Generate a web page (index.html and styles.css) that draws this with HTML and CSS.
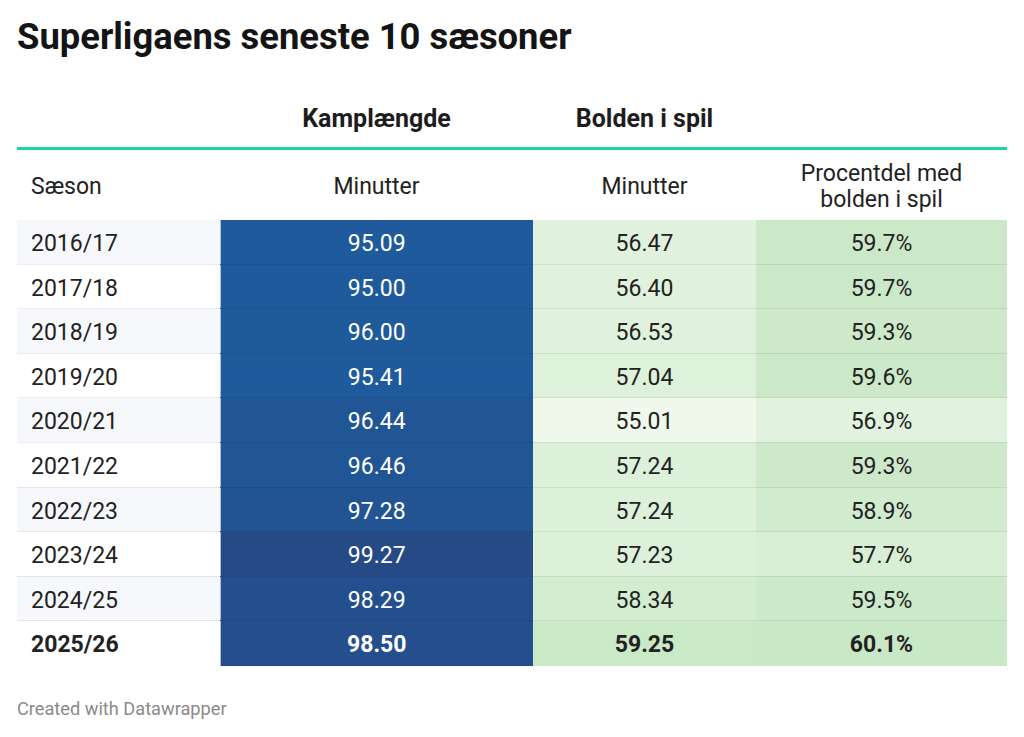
FILE: index.html
```html
<!DOCTYPE html>
<html lang="da">
<head>
<meta charset="utf-8">
<title>Superligaens seneste 10 sæsoner</title>
<link rel="stylesheet" href="styles.css">
</head>
<body>
<div class="chart">
  <h1 class="title">Superligaens seneste 10 sæsoner</h1>
  <table class="dw-table">
    <colgroup>
      <col class="c1"><col class="c2"><col class="c3"><col class="c4">
    </colgroup>
    <thead>
      <tr class="group-row">
        <th></th>
        <th class="center">Kamplængde</th>
        <th class="center">Bolden i spil</th>
        <th></th>
      </tr>
      <tr class="head-row">
        <th class="left">Sæson</th>
        <th class="center">Minutter</th>
        <th class="center">Minutter</th>
        <th class="center">Procentdel med<br>bolden i spil</th>
      </tr>
    </thead>
    <tbody>
      <tr class="odd"><td class="season">2016/17</td><td class="blue" style="background:#1f5b9c">95.09</td><td class="green" style="background:#e0f2dd">56.47</td><td class="green" style="background:#cbe9c8">59.7%</td></tr>
      <tr><td class="season">2017/18</td><td class="blue" style="background:#1f5b9c">95.00</td><td class="green" style="background:#e0f2dd">56.40</td><td class="green" style="background:#cbe9c8">59.7%</td></tr>
      <tr class="odd"><td class="season">2018/19</td><td class="blue" style="background:#1f5a9a">96.00</td><td class="green" style="background:#e0f2dd">56.53</td><td class="green" style="background:#cde9ca">59.3%</td></tr>
      <tr><td class="season">2019/20</td><td class="blue" style="background:#1f5b9c">95.41</td><td class="green" style="background:#def1db">57.04</td><td class="green" style="background:#cbe9c8">59.6%</td></tr>
      <tr class="odd"><td class="season">2020/21</td><td class="blue" style="background:#215696">96.44</td><td class="green" style="background:#eff8ea">55.01</td><td class="green" style="background:#e1f2de">56.9%</td></tr>
      <tr><td class="season">2021/22</td><td class="blue" style="background:#215696">96.46</td><td class="green" style="background:#ddf0da">57.24</td><td class="green" style="background:#cde9ca">59.3%</td></tr>
      <tr class="odd"><td class="season">2022/23</td><td class="blue" style="background:#225393">97.28</td><td class="green" style="background:#ddf0da">57.24</td><td class="green" style="background:#d0ebcd">58.9%</td></tr>
      <tr><td class="season">2023/24</td><td class="blue" style="background:#254a86">99.27</td><td class="green" style="background:#ddf0da">57.23</td><td class="green" style="background:#d8eed5">57.7%</td></tr>
      <tr class="odd"><td class="season">2024/25</td><td class="blue" style="background:#244f8e">98.29</td><td class="green" style="background:#d3edd0">58.34</td><td class="green" style="background:#cce9c9">59.5%</td></tr>
      <tr class="last"><td class="season">2025/26</td><td class="blue" style="background:#244e8c">98.50</td><td class="green" style="background:#cae9c7">59.25</td><td class="green" style="background:#c9e8c6">60.1%</td></tr>
    </tbody>
  </table>
  <p class="footer">Created with Datawrapper</p>
</div>
</body>
</html>
```

FILE: styles.css
```css
html, body {
  margin: 0;
  padding: 0;
  background: #ffffff;
}
body {
  font-family: Roboto, "Liberation Sans", Arial, sans-serif;
  color: #1d1d1d;
}
.chart {
  padding: 13px 17px 0 17px;
  width: 990px;
}
.title {
  margin: 0;
  font-size: 36.4px;
  line-height: 48px;
  font-weight: 700;
  color: #141414;
}
.dw-table {
  margin-top: 29px;
  width: 990px;
  border-collapse: collapse;
  table-layout: fixed;
  font-size: 23px;
}
.c1 { width: 203px; }
.c2 { width: 313px; }
.c3 { width: 223px; }
.c4 { width: 251px; }
.group-row th {
  height: 57px;
  padding: 0;
  font-weight: 700;
  font-size: 25px;
  color: #1d1d1d;
  border-bottom: 3px solid #1dd3a7;
  vertical-align: middle;
}
.head-row th {
  height: 67px;
  padding: 3px 0 0 0;
  font-weight: 400;
  font-size: 23px;
  line-height: 26px;
  color: #222;
  vertical-align: middle;
}
.center { text-align: center; }
.left { text-align: left; padding-left: 14px !important; }
tbody td {
  padding: 12px 0 7px 0;
  line-height: 24.6px;
  text-align: center;
  vertical-align: middle;
  border-bottom: 1px solid rgba(0, 0, 0, 0.07);
}
tbody tr.last td {
  border-bottom: none;
  padding-bottom: 8px;
}
td.season {
  text-align: left;
  padding-left: 14px;
  color: #222;
}
tr.odd td.season { background: #f7f8fb; }
td.blue {
  color: #ffffff;
  border-left: 1px solid #a9c2de;
}
td.green {
  color: #222;
}
tr.last td { font-weight: 700; }
.footer {
  margin: 32px 0 0 0;
  font-size: 18.2px;
  color: #8a8a8a;
}
```
